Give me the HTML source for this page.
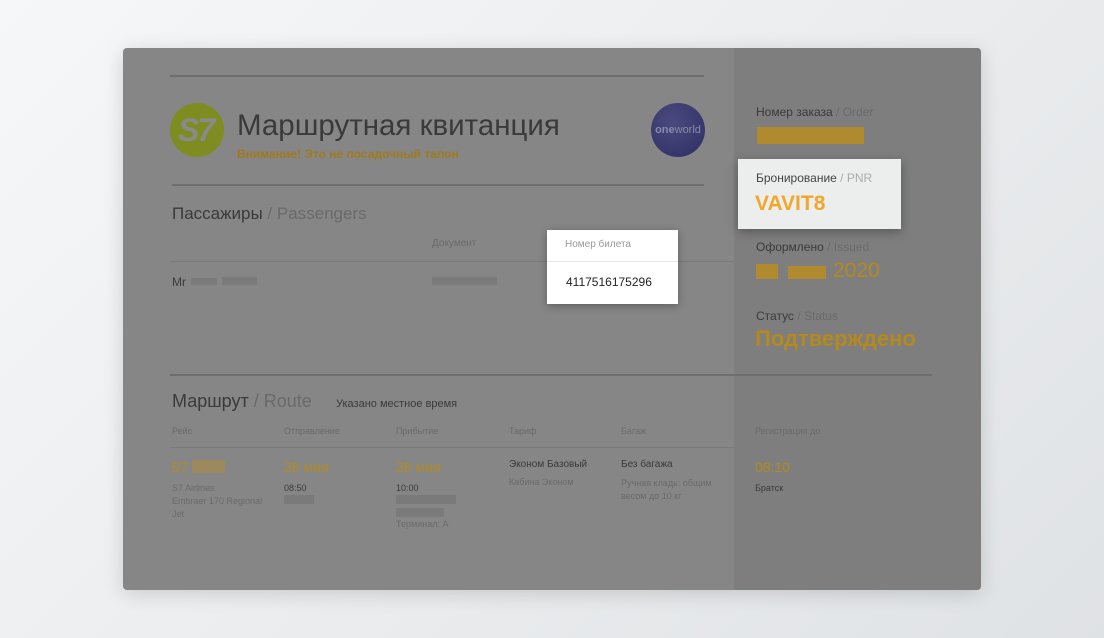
<!DOCTYPE html>
<html><head><meta charset="utf-8"><style>
*{margin:0;padding:0;box-sizing:border-box}
body{width:1104px;height:638px;overflow:hidden;background:linear-gradient(135deg,#f6f7f8 0%,#e9ebed 60%,#dfe2e5 100%);font-family:"Liberation Sans",sans-serif;position:relative}
.card{position:absolute;left:123px;top:48px;width:858px;height:542px;background:#868686;border-radius:4px;overflow:hidden;box-shadow:0 4px 20px rgba(0,0,0,.15)}
.right{position:absolute;left:611px;top:0;width:247px;height:542px;background:#7e7e7e}
.a{position:absolute;white-space:nowrap}
.line{position:absolute;height:2px;background:#6e6e6e}
.thin{position:absolute;height:1px;background:#7a7a7a}
.dk{color:#3a3a3a}.gr{color:#6a6a6a}.or{color:#b48a1e}
.blur{position:absolute;background:#7a7a7a}
.oblur{position:absolute;background:#b08a2e}
</style></head><body>
<div class="card">
<div class="right"></div>
<div class="line" style="left:47px;top:27px;width:534px"></div>
<div class="a" style="left:47px;top:55px;width:54px;height:54px;border-radius:50%;background:#7f8c22"></div>
<div class="a" style="left:55px;top:64px;font:italic bold 32px 'Liberation Sans';color:#8a8a8a;letter-spacing:-2px">S7</div>
<div class="a dk" style="left:114px;top:61px;font-size:29.5px">Маршрутная квитанция</div>
<div class="a or" style="left:114px;top:99px;font-size:12px;font-weight:bold;color:#a07a1e">Внимание! Это не посадочный талон</div>
<div class="a" style="left:528px;top:55px;width:54px;height:54px;border-radius:50%;background:radial-gradient(circle at 40% 35%,#4a4a80,#2e2e62)"></div>
<div class="a" style="left:530px;top:76px;width:50px;text-align:center;font-size:11px;color:#8a8aa8"><b>one</b>world</div>
<div class="line" style="left:49px;top:136px;width:532px"></div>
<div class="a" style="left:49px;top:156px;font-size:17px"><span class="dk">Пассажиры</span> <span class="gr">/ Passengers</span></div>
<div class="a gr" style="left:309px;top:190px;font-size:10px">Документ</div>
<div class="thin" style="left:47px;top:213px;width:564px"></div>
<div class="a dk" style="left:49px;top:227px;font-size:12px">Mr</div>
<div class="blur" style="left:68px;top:230px;width:26px;height:7px"></div>
<div class="blur" style="left:99px;top:229px;width:35px;height:8px"></div>
<div class="blur" style="left:309px;top:229px;width:65px;height:8px"></div>
<div class="a" style="left:424px;top:182px;width:131px;height:74px;background:#fff;box-shadow:0 2px 8px rgba(0,0,0,.3)">
<div class="a" style="left:18px;top:9px;font-size:10px;color:#999">Номер билета</div>
<div class="a" style="left:0;top:31px;width:131px;height:1px;background:#e6e6e6"></div>
<div class="a" style="left:19px;top:45px;font-size:12px;color:#222">4117516175296</div>
</div>
<div class="a" style="left:633px;top:57px;font-size:12px"><span class="dk">Номер заказа</span> <span class="gr">/ Order</span></div>
<div class="oblur" style="left:634px;top:79px;width:107px;height:17px"></div>
<div class="a" style="left:615px;top:111px;width:163px;height:70px;background:#eceeee;box-shadow:0 3px 10px rgba(0,0,0,.3)">
<div class="a" style="left:18px;top:12px;font-size:12px"><span style="color:#444">Бронирование</span> <span style="color:#aaa">/ PNR</span></div>
<div class="a" style="left:17px;top:33px;font-size:21px;font-weight:bold;color:#f2a62a">VAVIT8</div>
</div>
<div class="a" style="left:633px;top:192px;font-size:12px"><span class="dk">Оформлено</span> <span class="gr">/ Issued</span></div>
<div class="oblur" style="left:633px;top:216px;width:22px;height:15px"></div>
<div class="oblur" style="left:665px;top:218px;width:38px;height:13px"></div>
<div class="a or" style="left:710px;top:211px;font-size:21px">2020</div>
<div class="a" style="left:633px;top:261px;font-size:12px"><span class="dk">Статус</span> <span class="gr">/ Status</span></div>
<div class="a or" style="left:632px;top:278px;font-size:22px;font-weight:bold">Подтверждено</div>
<div class="line" style="left:47px;top:326px;width:762px"></div>
<div class="a" style="left:49px;top:343px;font-size:18px"><span class="dk">Маршрут</span> <span class="gr">/ Route</span></div>
<div class="a dk" style="left:213px;top:350px;font-size:11px">Указано местное время</div>
<div class="a gr" style="left:49px;top:378px;font-size:9px">Рейс</div>
<div class="a gr" style="left:161px;top:378px;font-size:9px">Отправление</div>
<div class="a gr" style="left:273px;top:378px;font-size:9px">Прибытие</div>
<div class="a gr" style="left:386px;top:378px;font-size:9px">Тариф</div>
<div class="a gr" style="left:498px;top:378px;font-size:9px">Багаж</div>
<div class="a gr" style="left:632px;top:378px;font-size:9px">Регистрация до</div>
<div class="thin" style="left:47px;top:399px;width:564px"></div>
<div class="a or" style="left:48px;top:411px;font-size:14px">S7</div>
<div class="oblur" style="left:69px;top:412px;width:33px;height:13px;background:#9c8a5e"></div>
<div class="a gr" style="left:49px;top:434px;font-size:9px;line-height:13px">S7 Airlines<br>Embraer 170 Regional<br>Jet</div>
<div class="a or" style="left:161px;top:411px;font-size:14px">28 мая</div>
<div class="a dk" style="left:161px;top:435px;font-size:9px">08:50</div>
<div class="blur" style="left:161px;top:447px;width:30px;height:9px"></div>
<div class="a or" style="left:273px;top:411px;font-size:14px">28 мая</div>
<div class="a dk" style="left:273px;top:435px;font-size:9px">10:00</div>
<div class="blur" style="left:273px;top:447px;width:60px;height:9px"></div>
<div class="blur" style="left:273px;top:460px;width:48px;height:9px"></div>
<div class="a gr" style="left:273px;top:471px;font-size:9px">Терминал: A</div>
<div class="a dk" style="left:386px;top:411px;font-size:10px">Эконом Базовый</div>
<div class="a gr" style="left:386px;top:429px;font-size:9px">Кабина Эконом</div>
<div class="a dk" style="left:498px;top:411px;font-size:10px">Без багажа</div>
<div class="a gr" style="left:498px;top:429px;font-size:9px;line-height:13px">Ручная кладь: общим<br>весом до 10 кг</div>
<div class="a or" style="left:632px;top:411px;font-size:14px">08:10</div>
<div class="a dk" style="left:632px;top:435px;font-size:9px">Братск</div>
</div>
</body></html>
